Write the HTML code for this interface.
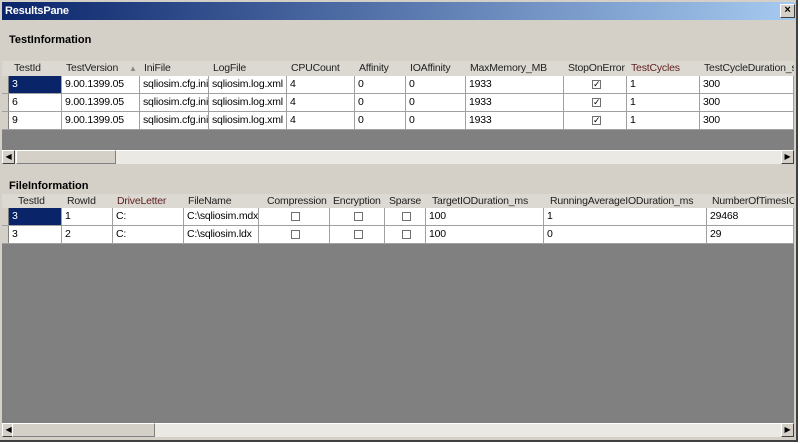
<!DOCTYPE html>
<html><head><style>
*{margin:0;padding:0;box-sizing:border-box}
body{width:800px;height:444px;background:#fff;position:relative;overflow:hidden;font-family:"Liberation Sans",sans-serif;font-size:10.5px;letter-spacing:-0.2px;color:#000}
.a{position:absolute}
.win{left:0;top:0;width:798px;height:442px;background:#d4d0c8;border-right:2px solid #404040;border-bottom:2px solid #404040}
.title{left:2px;top:2px;width:794px;height:18px;background:linear-gradient(90deg,#0a246a,#a6caf0);color:#fff;font-weight:bold;font-size:11px;line-height:18px;padding-left:3px}
.close{left:780px;top:4px;width:15px;height:14px;background:#d4d0c8;border:1px solid;border-color:#fff #404040 #404040 #fff;font-size:11px;line-height:11px;text-align:center;color:#000;font-weight:bold}
.h{font-weight:bold;font-size:11px;letter-spacing:0}
.dark{background:#808080}
.cell{position:absolute;height:100%;border-right:1px solid #a0a0a0;padding-left:3px;white-space:nowrap;overflow:hidden}
.row{position:absolute;left:2px;width:792px;background:#fff;border-bottom:1px solid #a0a0a0}
.hdr{position:absolute;left:2px;width:792px;background:#dcd9d2;color:#222}
.hdr .cell{border-right:none;line-height:15px}
.row .cell{line-height:17px}
.rs{position:absolute;left:0;width:7px;height:100%;background:#d4d0c8;border-right:1px solid #808080}
.sel{background:#0a246a;color:#fff}
.cb{display:inline-block;width:9px;height:9px;border:1px solid #707070;background:#fff;vertical-align:middle;font-size:9px;line-height:7px;text-align:center}
.sb{background:#ebe9e4;border-top:1px solid #fff}
.th{background:#d4d0c8;border:1px solid;border-color:#fff #808080 #808080 #fff}
.btn{width:13px;background:#d4d0c8;border:1px solid;border-color:#fff #404040 #404040 #fff;font-size:8px;line-height:12px;text-align:center}
</style></head><body>
<div class="a win"></div>
<div class="a title">ResultsPane</div>
<div class="a close">×</div>
<div class="a h" style="left:9px;top:34px">TestInformation</div>

<div class="a dark" style="left:2px;top:61px;width:792px;height:103px"></div>
<div class="hdr" style="top:61px;height:15px">
<div class="cell" style="left:9px;width:51px">TestId</div>
<div class="cell" style="left:61px;width:77px">TestVersion &nbsp;&nbsp; <span style="color:#888;font-size:8px">▲</span></div>
<div class="cell" style="left:139px;width:68px">IniFile</div>
<div class="cell" style="left:208px;width:77px">LogFile</div>
<div class="cell" style="left:286px;width:67px">CPUCount</div>
<div class="cell" style="left:354px;width:50px">Affinity</div>
<div class="cell" style="left:405px;width:59px">IOAffinity</div>
<div class="cell" style="left:465px;width:97px">MaxMemory_MB</div>
<div class="cell" style="left:563px;width:62px">StopOnError</div>
<div class="cell" style="left:626px;width:72px;color:#602020">TestCycles</div>
<div class="cell" style="left:699px;width:93px">TestCycleDuration_s</div>
</div>
<div class="row" style="top:76px;height:18px"><div class="rs"></div>
<div class="cell sel" style="left:7px;width:53px">3</div>
<div class="cell" style="left:60px;width:78px">9.00.1399.05</div>
<div class="cell" style="left:138px;width:69px">sqliosim.cfg.ini</div>
<div class="cell" style="left:207px;width:78px">sqliosim.log.xml</div>
<div class="cell" style="left:285px;width:68px">4</div>
<div class="cell" style="left:353px;width:51px">0</div>
<div class="cell" style="left:404px;width:60px">0</div>
<div class="cell" style="left:464px;width:98px">1933</div>
<div class="cell" style="left:562px;width:63px;text-align:center"><span class="cb">✓</span></div>
<div class="cell" style="left:625px;width:73px">1</div>
<div class="cell" style="left:698px;width:94px">300</div></div>
<div class="row" style="top:94px;height:18px"><div class="rs"></div>
<div class="cell" style="left:7px;width:53px">6</div>
<div class="cell" style="left:60px;width:78px">9.00.1399.05</div>
<div class="cell" style="left:138px;width:69px">sqliosim.cfg.ini</div>
<div class="cell" style="left:207px;width:78px">sqliosim.log.xml</div>
<div class="cell" style="left:285px;width:68px">4</div>
<div class="cell" style="left:353px;width:51px">0</div>
<div class="cell" style="left:404px;width:60px">0</div>
<div class="cell" style="left:464px;width:98px">1933</div>
<div class="cell" style="left:562px;width:63px;text-align:center"><span class="cb">✓</span></div>
<div class="cell" style="left:625px;width:73px">1</div>
<div class="cell" style="left:698px;width:94px">300</div></div>
<div class="row" style="top:112px;height:18px"><div class="rs"></div>
<div class="cell" style="left:7px;width:53px">9</div>
<div class="cell" style="left:60px;width:78px">9.00.1399.05</div>
<div class="cell" style="left:138px;width:69px">sqliosim.cfg.ini</div>
<div class="cell" style="left:207px;width:78px">sqliosim.log.xml</div>
<div class="cell" style="left:285px;width:68px">4</div>
<div class="cell" style="left:353px;width:51px">0</div>
<div class="cell" style="left:404px;width:60px">0</div>
<div class="cell" style="left:464px;width:98px">1933</div>
<div class="cell" style="left:562px;width:63px;text-align:center"><span class="cb">✓</span></div>
<div class="cell" style="left:625px;width:73px">1</div>
<div class="cell" style="left:698px;width:94px">300</div></div>
<div class="a sb" style="left:2px;top:150px;width:792px;height:14px"></div>
<div class="a btn" style="left:2px;top:150px;height:14px">◀</div>
<div class="a th" style="left:16px;top:150px;width:100px;height:14px"></div>
<div class="a btn" style="left:781px;top:150px;height:14px">▶</div>

<div class="a h" style="left:9px;top:180px">FileInformation</div>
<div class="a dark" style="left:2px;top:194px;width:792px;height:243px"></div>
<div class="hdr" style="top:194px;height:14px">
<div class="cell" style="left:9px;width:51px;padding-left:7px">TestId</div>
<div class="cell" style="left:61px;width:50px;padding-left:4px">RowId</div>
<div class="cell" style="left:112px;width:70px;color:#602020">DriveLetter</div>
<div class="cell" style="left:183px;width:74px">FileName</div>
<div class="cell" style="left:262px;width:66px">Compression</div>
<div class="cell" style="left:328px;width:57px">Encryption</div>
<div class="cell" style="left:384px;width:40px">Sparse</div>
<div class="cell" style="left:427px;width:115px">TargetIODuration_ms</div>
<div class="cell" style="left:545px;width:160px">RunningAverageIODuration_ms</div>
<div class="cell" style="left:707px;width:85px">NumberOfTimesIOT</div>
</div>
<div class="row" style="top:208px;height:18px"><div class="rs"></div>
<div class="cell sel" style="left:7px;width:53px">3</div>
<div class="cell" style="left:60px;width:51px">1</div>
<div class="cell" style="left:111px;width:71px">C:</div>
<div class="cell" style="left:182px;width:75px">C:\sqliosim.mdx</div>
<div class="cell" style="left:257px;width:71px;text-align:center"><span class="cb"></span></div>
<div class="cell" style="left:328px;width:55px;text-align:center"><span class="cb"></span></div>
<div class="cell" style="left:383px;width:41px;text-align:center"><span class="cb"></span></div>
<div class="cell" style="left:424px;width:118px">100</div>
<div class="cell" style="left:542px;width:163px">1</div>
<div class="cell" style="left:705px;width:87px">29468</div></div>
<div class="row" style="top:226px;height:18px"><div class="rs"></div>
<div class="cell" style="left:7px;width:53px">3</div>
<div class="cell" style="left:60px;width:51px">2</div>
<div class="cell" style="left:111px;width:71px">C:</div>
<div class="cell" style="left:182px;width:75px">C:\sqliosim.ldx</div>
<div class="cell" style="left:257px;width:71px;text-align:center"><span class="cb"></span></div>
<div class="cell" style="left:328px;width:55px;text-align:center"><span class="cb"></span></div>
<div class="cell" style="left:383px;width:41px;text-align:center"><span class="cb"></span></div>
<div class="cell" style="left:424px;width:118px">100</div>
<div class="cell" style="left:542px;width:163px">0</div>
<div class="cell" style="left:705px;width:87px">29</div></div>
<div class="a sb" style="left:2px;top:423px;width:792px;height:14px"></div>
<div class="a btn" style="left:2px;top:423px;height:14px">◀</div>
<div class="a th" style="left:12px;top:423px;width:143px;height:14px"></div>
<div class="a btn" style="left:781px;top:423px;height:14px">▶</div>
</body></html>
